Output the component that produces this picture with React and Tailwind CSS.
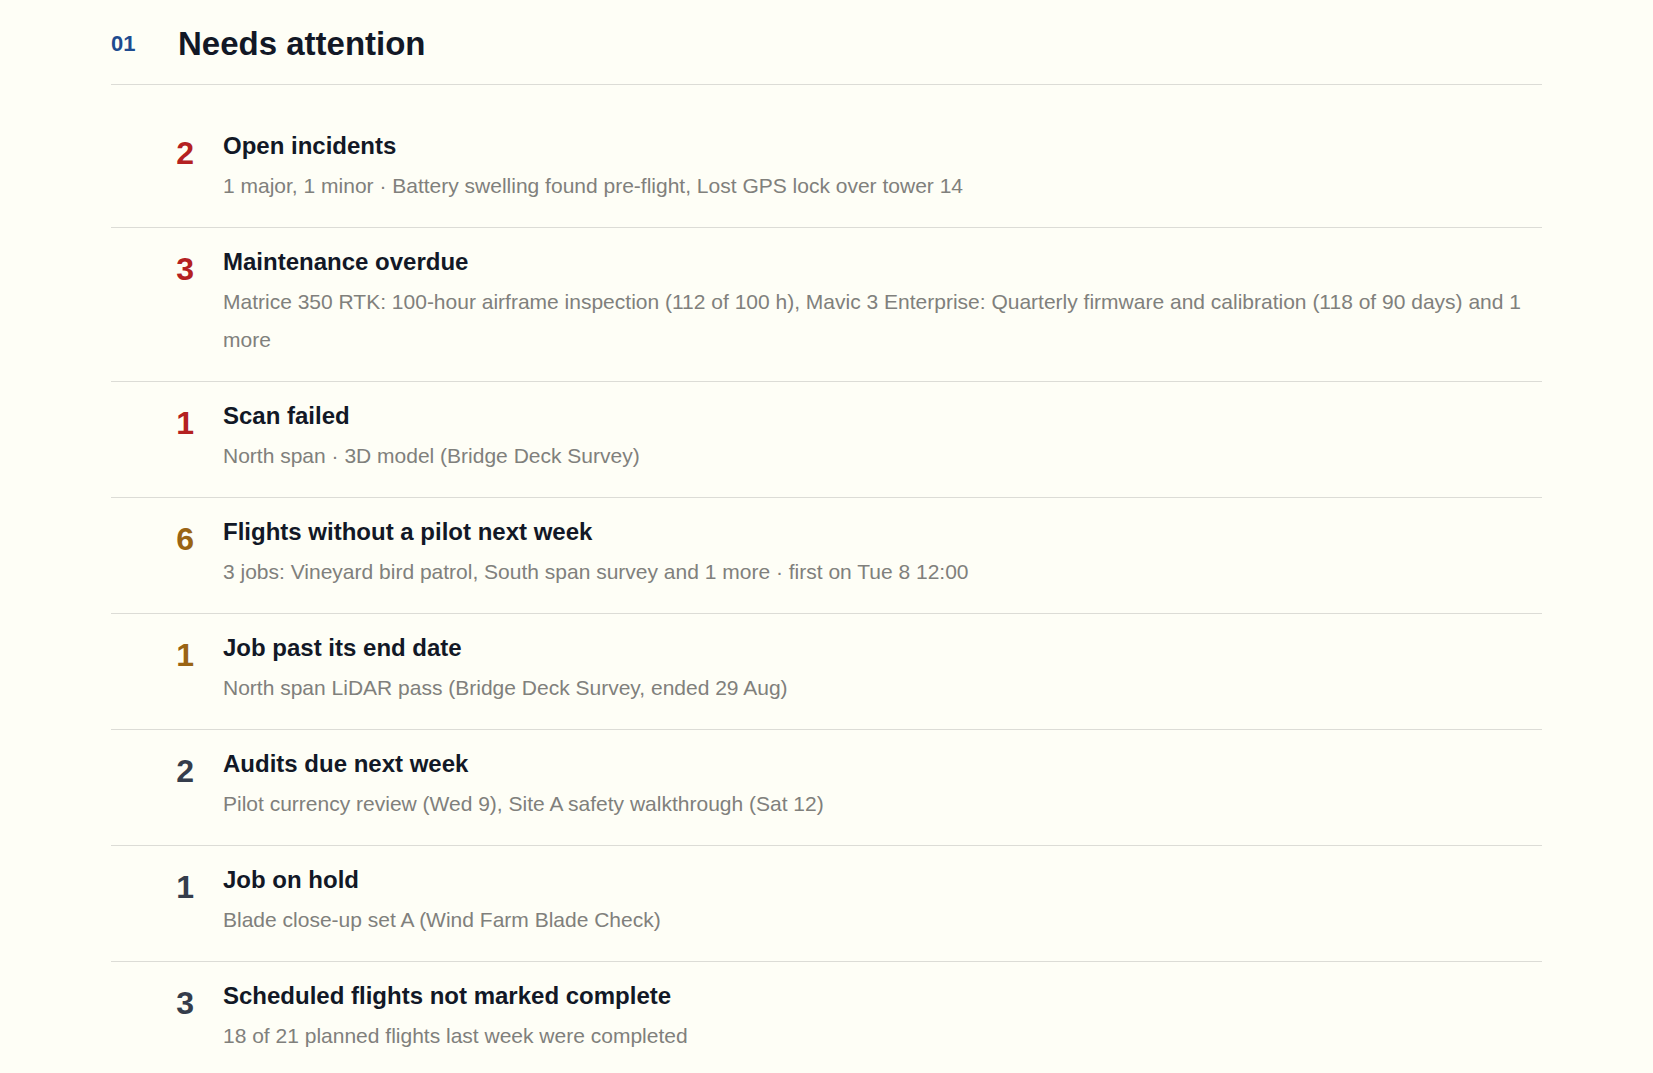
const items = [
  {
    count: 2,
    tone: "text-[#b42121]",
    title: "Open incidents",
    detail: "1 major, 1 minor · Battery swelling found pre-flight, Lost GPS lock over tower 14",
  },
  {
    count: 3,
    tone: "text-[#b42121]",
    title: "Maintenance overdue",
    detail:
      "Matrice 350 RTK: 100-hour airframe inspection (112 of 100 h), Mavic 3 Enterprise: Quarterly firmware and calibration (118 of 90 days) and 1 more",
  },
  {
    count: 1,
    tone: "text-[#b42121]",
    title: "Scan failed",
    detail: "North span · 3D model (Bridge Deck Survey)",
  },
  {
    count: 6,
    tone: "text-[#9a6414]",
    title: "Flights without a pilot next week",
    detail: "3 jobs: Vineyard bird patrol, South span survey and 1 more · first on Tue 8 12:00",
  },
  {
    count: 1,
    tone: "text-[#9a6414]",
    title: "Job past its end date",
    detail: "North span LiDAR pass (Bridge Deck Survey, ended 29 Aug)",
  },
  {
    count: 2,
    tone: "text-[#353d4b]",
    title: "Audits due next week",
    detail: "Pilot currency review (Wed 9), Site A safety walkthrough (Sat 12)",
  },
  {
    count: 1,
    tone: "text-[#353d4b]",
    title: "Job on hold",
    detail: "Blade close-up set A (Wind Farm Blade Check)",
  },
  {
    count: 3,
    tone: "text-[#353d4b]",
    title: "Scheduled flights not marked complete",
    detail: "18 of 21 planned flights last week were completed",
  },
];

function AttentionRow({ item, last }) {
  return (
    <li className={"flex gap-[29px] pt-[20px] pb-[22px] " + (last ? "" : "border-b border-[#dcdcd6]")}>
      <div className={"w-[83px] shrink-0 text-right text-[32px] leading-[42px] font-bold " + item.tone}>
        {item.count}
      </div>
      <div className="min-w-0 flex-1">
        <div className="text-[24px] leading-7 font-bold text-[#121826]">{item.title}</div>
        <div className="mt-[7px] text-[21px] leading-[38px] text-[#80807c]">{item.detail}</div>
      </div>
    </li>
  );
}

export default function App() {
  return (
    <div
      className="min-h-screen bg-[#fefef6] text-[#121826]"
      style={{ fontFamily: '"Liberation Sans", Arial, sans-serif' }}
    >
      <div className="mx-auto w-[1431px]">
        <header className="flex items-center pt-6 pb-5 border-b border-[#dcdcd6]">
          <span className="w-[67px] text-[22px] leading-7 font-bold text-[#1e4b8f]">01</span>
          <h1 className="text-[33px] leading-10 font-bold text-[#121826]">Needs attention</h1>
        </header>
        <ul className="mt-[27px]">
          {items.map((item, i) => (
            <AttentionRow key={i} item={item} last={i === items.length - 1} />
          ))}
        </ul>
      </div>
    </div>
  );
}
